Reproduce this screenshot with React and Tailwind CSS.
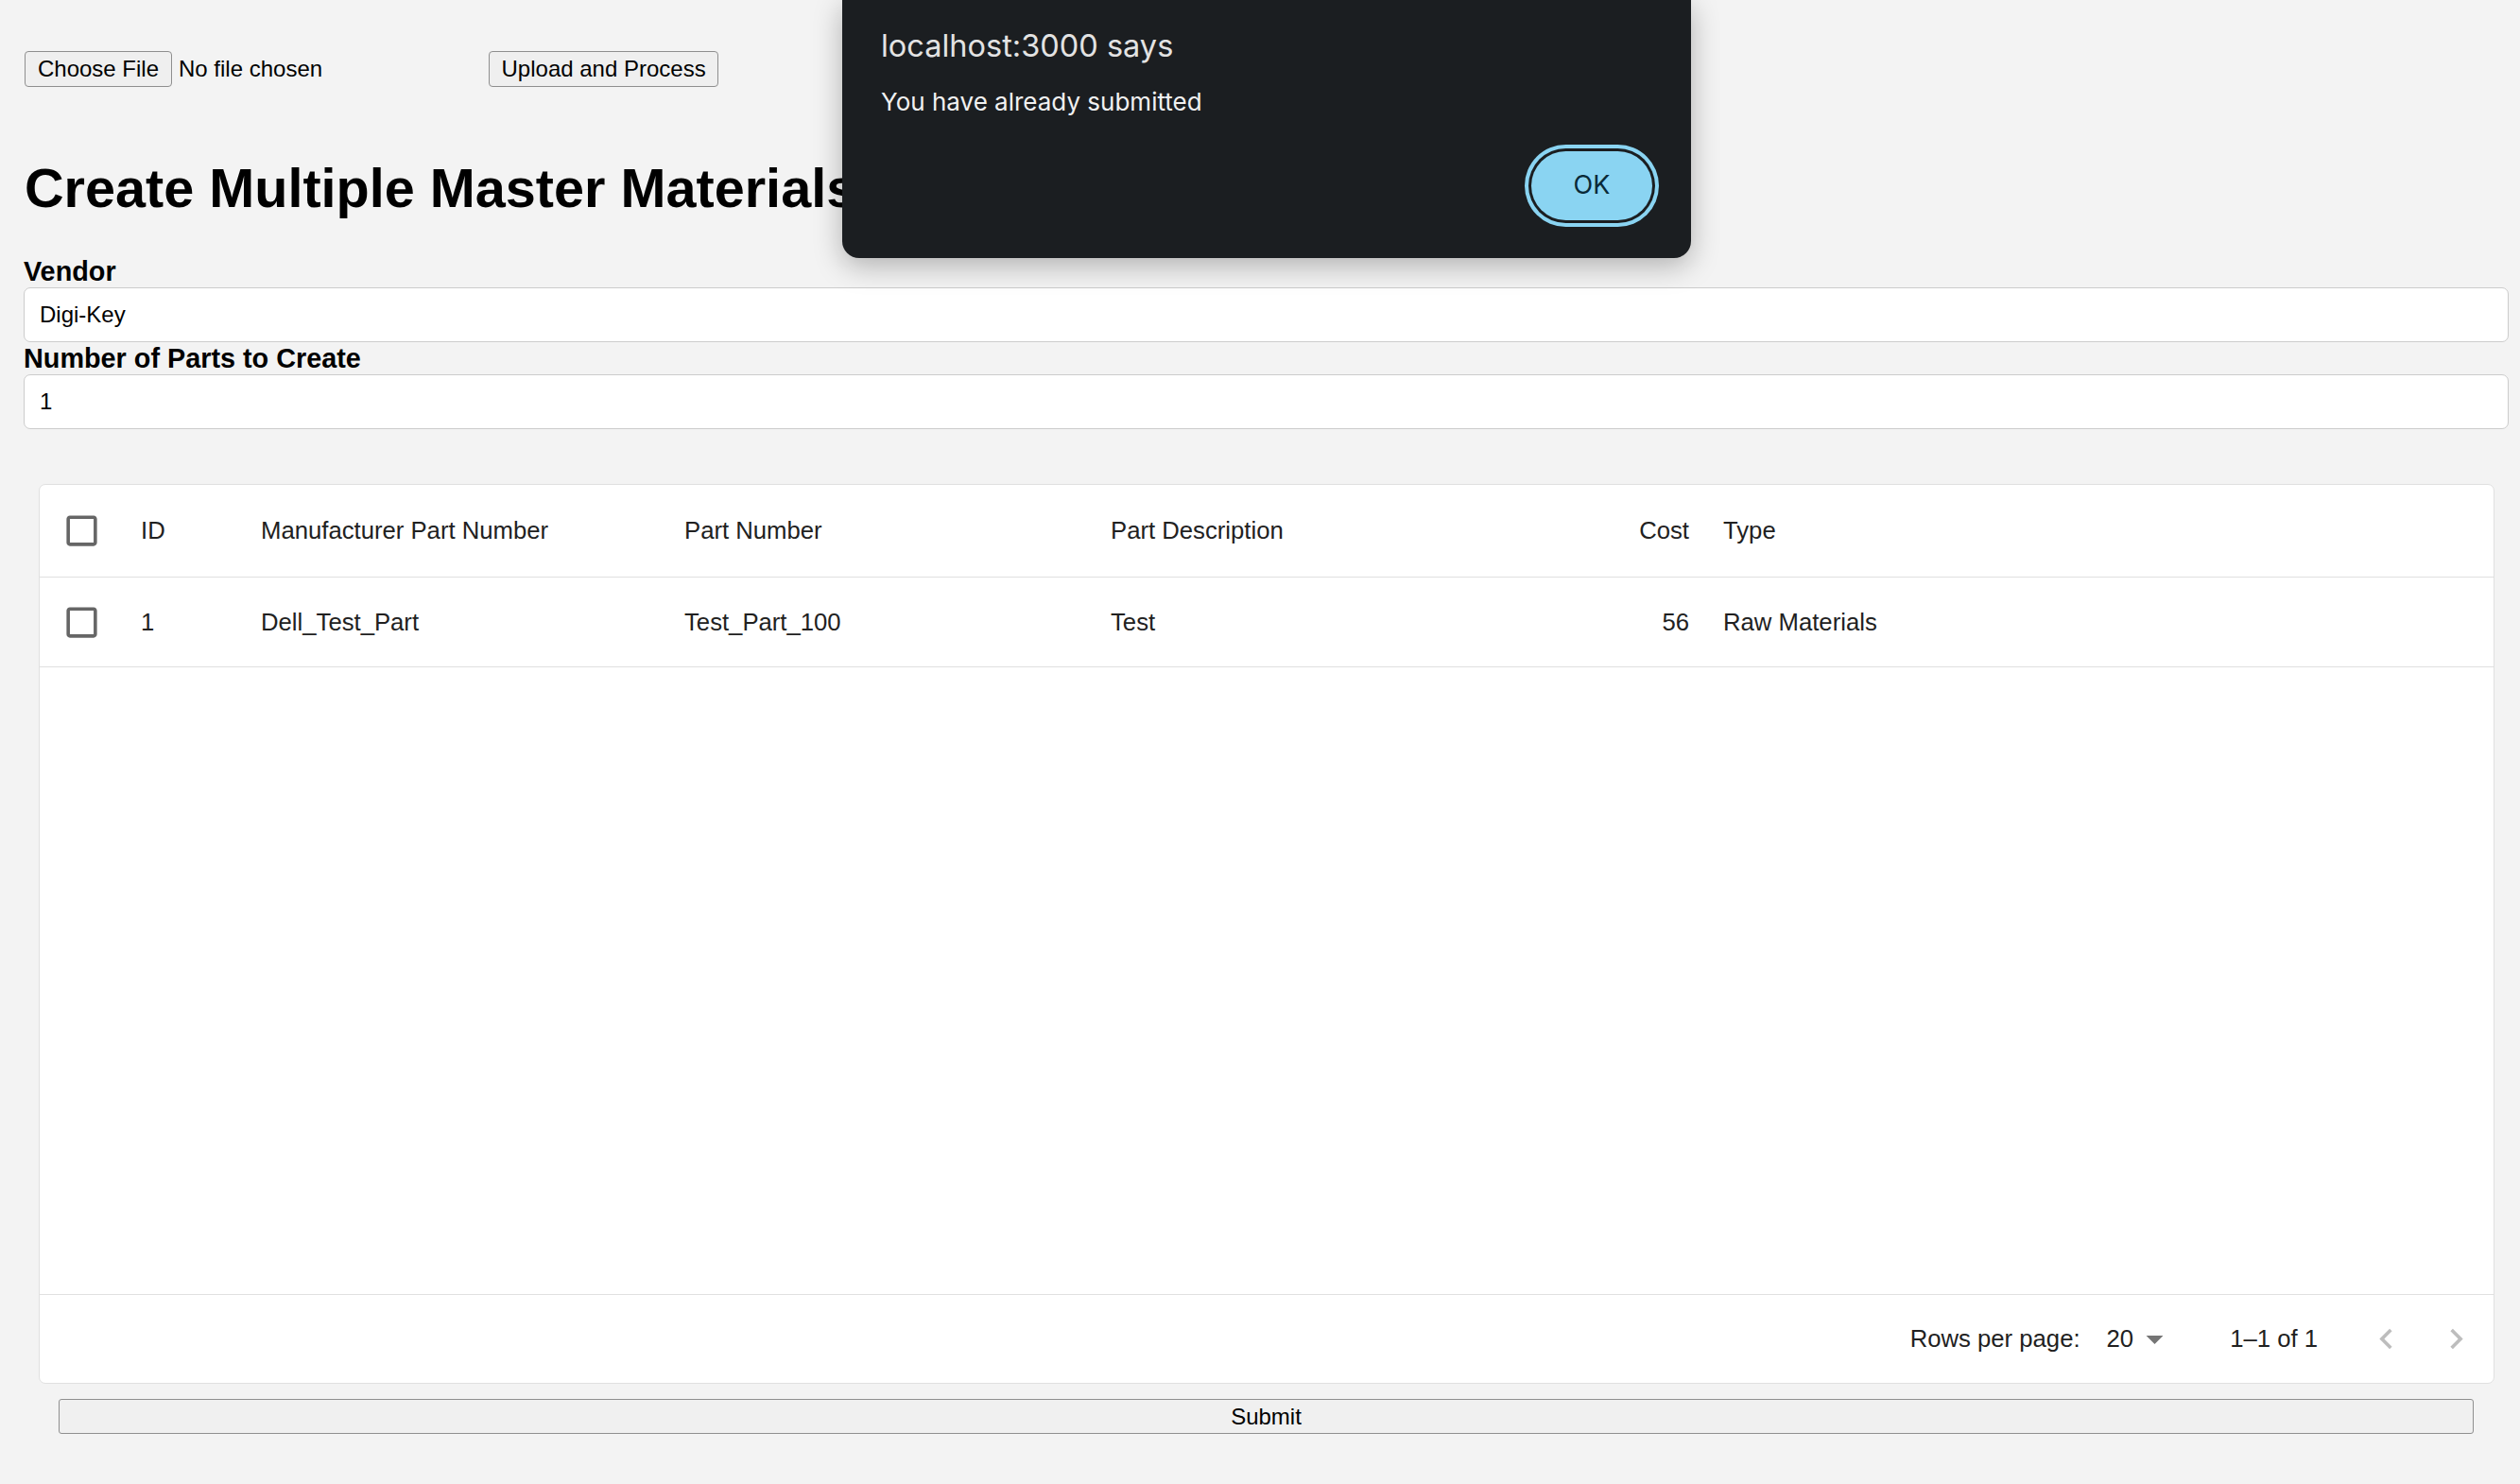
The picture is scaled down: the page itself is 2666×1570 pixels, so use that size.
import React from 'react';

const sans = { fontFamily: '"Liberation Sans", Arial, Helvetica, sans-serif' };

function BoxIcon() {
    return (
        <svg viewBox="0 0 24 24" className="w-[43px] h-[43px] fill-[#666666]">
            <path d="M19 5v14H5V5h14m0-2H5c-1.11 0-2 .9-2 2v14c0 1.1.89 2 2 2h14c1.1 0 2-.9 2-2V5c0-1.1-.9-2-2-2z" />
        </svg>
    );
}

const cols = [
    { key: 'id', label: 'ID', w: 'w-[127px]' },
    { key: 'mpn', label: 'Manufacturer Part Number', w: 'w-[448px]' },
    { key: 'pn', label: 'Part Number', w: 'w-[451px]' },
    { key: 'pd', label: 'Part Description', w: 'w-[450px]' },
    { key: 'cost', label: 'Cost', w: 'w-[198px]', right: true },
    { key: 'type', label: 'Type', w: 'flex-1' },
];

const rows = [
    { id: '1', mpn: 'Dell_Test_Part', pn: 'Test_Part_100', pd: 'Test', cost: '56', type: 'Raw Materials' },
];

function Row({ data, header }) {
    return (
        <div className={`flex items-center border-b border-[#e0e0e0] ${header ? 'h-[98px]' : 'h-[95px]'}`}>
            <div className="w-[89px] flex justify-center"><BoxIcon /></div>
            {cols.map(c => (
                <div key={c.key} className={`${c.w} px-[18px] ${c.right ? 'text-right' : ''}`}>
                    {header ? c.label : data[c.key]}
                </div>
            ))}
        </div>
    );
}

export default function App() {
    return (
        <div className="relative min-h-[1570px] w-full bg-[#f3f3f3] text-black" style={sans}>
            <div className="pl-[25px] pr-[12px]">
                {/* file upload row */}
                <div className="flex items-center pt-[54px] text-[24px]">
                    <button className="ml-[1px] h-[38px] w-[156px] rounded-[4px] border border-[#8f8f8f] bg-[#efefef] text-[24px]">Choose File</button>
                    <span className="ml-[7px]">No file chosen</span>
                    <button className="ml-[176px] h-[38px] w-[243px] rounded-[4px] border border-[#8f8f8f] bg-[#efefef] text-[24px]">Upload and Process</button>
                </div>

                <h1 className="mt-[74px] ml-[1px] text-[57.6px] leading-[66px] font-bold whitespace-nowrap">Create Multiple Master Materials</h1>

                <div className="mt-[38px]">
                    <label className="block text-[28.8px] leading-[34px] font-bold">Vendor</label>
                    <div className="h-[58px] flex items-center rounded-[7px] border border-[#cccccc] bg-white pl-[16px] text-[24px]">Digi-Key</div>
                    <label className="block text-[28.8px] leading-[34px] font-bold">Number of Parts to Create</label>
                    <div className="h-[58px] flex items-center rounded-[7px] border border-[#cccccc] bg-white pl-[16px] text-[24px]">1</div>
                </div>

                {/* data grid */}
                <div className="mt-[58px] ml-[16px] mr-[15px] h-[952px] flex flex-col rounded-[7px] border border-[#e0e0e0] bg-white text-[25.7px] text-[#212121]">
                    <Row header />
                    {rows.map(r => <Row key={r.id} data={r} />)}
                    <div className="flex-1" />
                    <div className="h-[94px] border-t border-[#e0e0e0] flex items-center justify-end pr-[4px]">
                        <span>Rows per page:</span>
                        <span className="ml-[28px]">20</span>
                        <svg viewBox="0 0 24 24" className="ml-[1px] w-[43px] h-[43px] fill-[#757575]"><path d="M7 10l5 5 5-5z" /></svg>
                        <span className="ml-[58px]">1–1 of 1</span>
                        <div className="ml-[36px] w-[72px] h-[72px] flex items-center justify-center">
                            <svg viewBox="0 0 24 24" className="w-[43px] h-[43px] fill-[#bdbdbd]"><path d="M15.41 16.59L10.83 12l4.58-4.59L14 6l-6 6 6 6 1.41-1.41z" /></svg>
                        </div>
                        <div className="ml-[2px] w-[72px] h-[72px] flex items-center justify-center">
                            <svg viewBox="0 0 24 24" className="w-[43px] h-[43px] fill-[#bdbdbd]"><path d="M8.59 16.59L13.17 12 8.59 7.41 10 6l6 6-6 6-1.41-1.41z" /></svg>
                        </div>
                    </div>
                </div>

                <div className="mt-[16px] mx-[37px]">
                    <button className="w-full h-[37px] rounded-[3px] border border-[#8f8f8f] bg-[#f0f0f0] text-[24px]">Submit</button>
                </div>
            </div>

            {/* browser alert */}
            <div className="absolute top-0 left-[891px] w-[898px] h-[273px] rounded-b-[18px] bg-[#1b1e21] shadow-[0_8px_30px_rgba(0,0,0,0.28)] pl-[41px] pr-[41px] pt-[29px]" style={{ fontFamily: 'Inter, "Noto Sans", sans-serif' }}>
                <div className="text-[32.5px] leading-[40px] text-[#e3e3e3]">localhost:3000 says</div>
                <div className="mt-[23px] text-[26px] leading-[32px] text-[#f1f1f1]">You have already submitted</div>
                <div className="mt-[36px] flex justify-end">
                    <button className="w-[128px] h-[73px] rounded-full bg-[#8ad4f2] text-[27px] text-[#0a2a38] shadow-[0_0_0_3px_#1b1e21,0_0_0_7px_#8ad4f2]">OK</button>
                </div>
            </div>
        </div>
    );
}
